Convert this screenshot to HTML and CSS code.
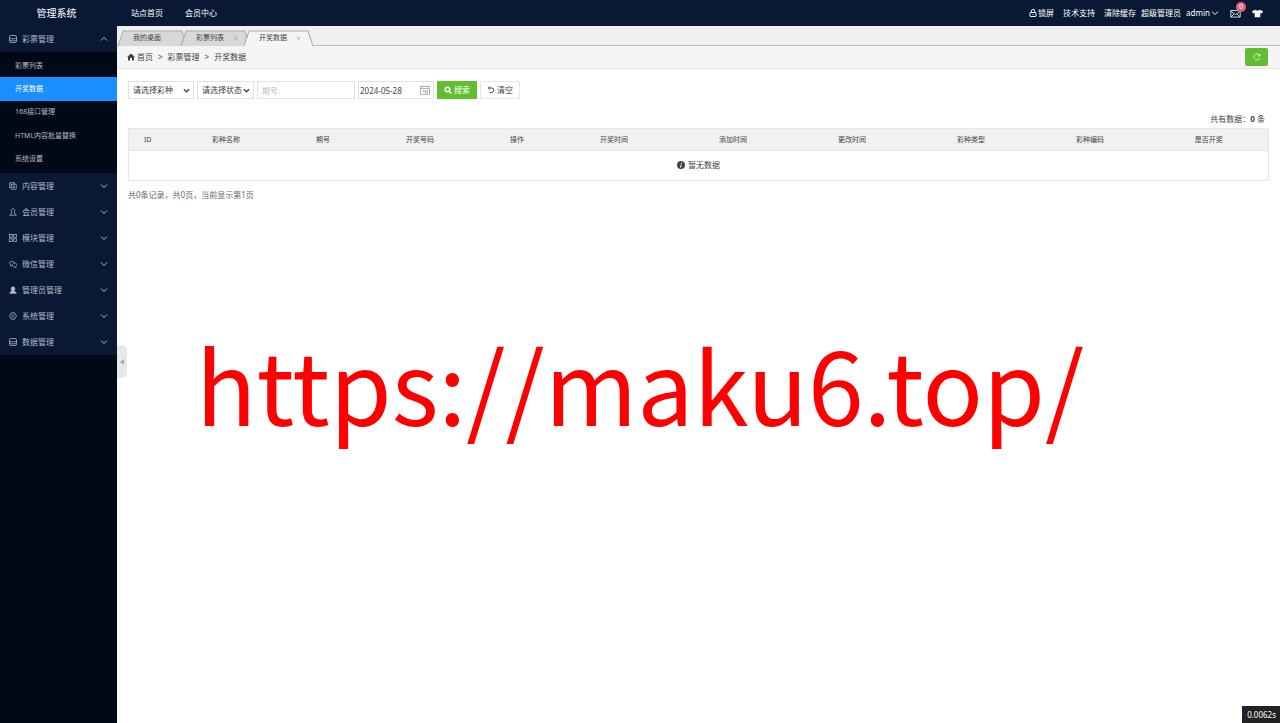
FILE: index.html
```html
<!DOCTYPE html>
<html lang="zh-CN">
<head>
    <meta charset="UTF-8">
    <meta name="viewport" content="width=device-width, initial-scale=1.0">
    <title>管理系统</title>
    <link rel="stylesheet" href="styles.css">
</head>
<body>
    <!-- 公用图标 -->
    <svg class="sprite" aria-hidden="true">
        <symbol id="i-data" viewBox="0 0 16 16"><rect x="1" y="1" width="14" height="14" rx="3"/><path d="M1 6c3 2.500 11 2.500 14 0M1 10c3 2.500 11 2.500 14 0"/></symbol>
        <symbol id="i-copy" viewBox="0 0 16 16"><path d="M4 11H1.500V1.500H11V4"/><rect x="4.500" y="4.500" width="10" height="10" rx="1"/><path d="M7 8h5M7 11h5M3 3l3 3"/></symbol>
        <symbol id="i-user" viewBox="0 0 16 16"><path d="M8 1.500c-2.500 0-3.500 2-3.500 4S5.500 9 6 10c0 1.500-4.500 1.500-4.500 4.500h13c0-3-4.500-3-4.500-4.500.5-1 1.500-2.500 1.500-4.500s-1-4-3.500-4z"/></symbol>
        <symbol id="i-block" viewBox="0 0 16 16"><rect x="1" y="1" width="5.500" height="5.500"/><rect x="9.500" y="1" width="5.500" height="5.500"/><rect x="1" y="9.500" width="5.500" height="5.500"/><rect x="9.500" y="9.500" width="5.500" height="5.500"/></symbol>
        <symbol id="i-wechat" viewBox="0 0 16 16"><path d="M6 11l-3 1 .5-2C-1 7 1 2.500 5.500 2.500c3 0 4.500 1.500 5 3.500"/><path d="M10.500 6c6 0 6.500 5 3 7l.5 2-2.500-1C5 14.500 5 6.500 10.500 6z"/></symbol>
        <symbol id="i-gear" viewBox="0 0 16 16"><path d="M5 1.500h6L15 8l-4 6.500H5L1 8z"/><path d="M5 6h6M5 10h6"/></symbol>
        <symbol id="i-down" viewBox="0 0 16 16"><path d="M2 5l6 6 6-6"/></symbol>
        <symbol id="i-close" viewBox="0 0 16 16"><path d="M2 2l12 12M14 2L2 14"/></symbol>
    </svg>

    <header class="topbar">
        <div class="logo">管理系统</div>
        <nav class="top-nav">
            <a href="#">站点首页</a>
            <a href="#">会员中心</a>
        </nav>
        <div class="top-tools">
            <a class="lock" href="#"><svg class="icon" viewBox="0 0 16 16"><rect x="2" y="7" width="12" height="8" rx="1"/><path d="M4.500 7V4.500a3.500 3.500 0 0 1 7 0V7M8 10v2"/></svg>锁屏</a>
            <a class="support" href="#">技术支持</a>
            <a href="#">清除缓存</a>
            <span>超级管理员</span>
            <a class="account" href="#">admin<svg class="icon chevron"><use href="#i-down"/></svg></a>
            <a class="mail" href="#" aria-label="消息">
                <svg class="icon" viewBox="0 0 20 16"><path d="M1.500 2.500h17v12h-17zM2 4l8 6 8-6M2 14l5-5M18 14l-5-5"/></svg>
                <span class="badge">0</span>
            </a>
            <a href="#" aria-label="换肤"><svg class="icon skin" viewBox="0 0 20 16"><path d="M6 1c1 2 7 2 8 0l6 3-2 4-3-1v8H5V7L2 8 0 4z"/></svg></a>
        </div>
    </header>

    <div class="layout">
        <aside class="sidebar">
            <ul class="menu">
                <li>
                    <a class="menu-head" href="#"><svg class="icon"><use href="#i-data"/></svg><span>彩票管理</span><svg class="icon chevron up"><use href="#i-down"/></svg></a>
                    <ul class="submenu">
                        <li><a href="#">彩票列表</a></li>
                        <li><a class="active" href="#">开奖数据</a></li>
                        <li><a href="#">168接口管理</a></li>
                        <li><a href="#">HTML内容批量替换</a></li>
                        <li><a href="#">系统设置</a></li>
                    </ul>
                </li>
                <li><a class="menu-head" href="#"><svg class="icon"><use href="#i-copy"/></svg><span>内容管理</span><svg class="icon chevron"><use href="#i-down"/></svg></a></li>
                <li><a class="menu-head" href="#"><svg class="icon"><use href="#i-user"/></svg><span>会员管理</span><svg class="icon chevron"><use href="#i-down"/></svg></a></li>
                <li><a class="menu-head" href="#"><svg class="icon"><use href="#i-block"/></svg><span>模块管理</span><svg class="icon chevron"><use href="#i-down"/></svg></a></li>
                <li><a class="menu-head" href="#"><svg class="icon"><use href="#i-wechat"/></svg><span>微信管理</span><svg class="icon chevron"><use href="#i-down"/></svg></a></li>
                <li><a class="menu-head" href="#"><svg class="icon solid"><use href="#i-user"/></svg><span>管理员管理</span><svg class="icon chevron"><use href="#i-down"/></svg></a></li>
                <li><a class="menu-head" href="#"><svg class="icon"><use href="#i-gear"/></svg><span>系统管理</span><svg class="icon chevron"><use href="#i-down"/></svg></a></li>
                <li><a class="menu-head" href="#"><svg class="icon"><use href="#i-data"/></svg><span>数据管理</span><svg class="icon chevron"><use href="#i-down"/></svg></a></li>
            </ul>
            <button class="fold" type="button" aria-label="收起菜单"><svg viewBox="0 0 4 6"><path d="M4 0v6L0 3z"/></svg></button>
        </aside>

        <main class="main">
            <ul class="tabs">
                <li class="tab">
                    <svg class="tab-shape" viewBox="0 0 68 16" preserveAspectRatio="none"><path d="M0 16L5 1h58l5 15"/></svg>
                    <a href="#">我的桌面</a>
                </li>
                <li class="tab">
                    <svg class="tab-shape" viewBox="0 0 68 16" preserveAspectRatio="none"><path d="M0 16L5 1h58l5 15"/></svg>
                    <a href="#">彩票列表</a>
                    <button type="button" aria-label="关闭"><svg class="icon"><use href="#i-close"/></svg></button>
                </li>
                <li class="tab current">
                    <svg class="tab-shape" viewBox="0 0 68 16" preserveAspectRatio="none"><path d="M0 16L5 1h58l5 15"/></svg>
                    <a href="#">开奖数据</a>
                    <button type="button" aria-label="关闭"><svg class="icon"><use href="#i-close"/></svg></button>
                </li>
            </ul>

            <div class="crumbs">
                <svg class="icon home" viewBox="0 0 16 16"><path d="M8 1l8 7h-2v7h-4v-5H6v5H2V8H0z"/></svg>
                <a href="#">首页</a><span>&gt;</span><a href="#">彩票管理</a><span>&gt;</span><a href="#">开奖数据</a>
                <button class="refresh" type="button" aria-label="刷新"><svg class="icon" viewBox="0 0 16 16"><path d="M13.500 10A6 6 0 0 1 3 11.500M2 9A6 6 0 0 1 12 3.500L14 6M14 2v4h-4"/></svg></button>
            </div>

            <div class="content">
                <form class="filters">
                    <div class="pick kind">
                        <select aria-label="彩种"><option>请选择彩种</option></select>
                        <svg class="icon"><use href="#i-down"/></svg>
                    </div>
                    <div class="pick state">
                        <select aria-label="状态"><option>请选择状态</option></select>
                        <svg class="icon"><use href="#i-down"/></svg>
                    </div>
                    <input class="issue" type="text" placeholder="期号" aria-label="期号">
                    <div class="pick date">
                        <input type="text" value="2024-05-28" aria-label="日期">
                        <svg class="icon" viewBox="0 0 20 20"><path d="M1 3h18v16H1zM1 7h18M5 1v4M15 1v4M5 11h3v5M11 11h4v5h-4z"/></svg>
                    </div>
                    <button class="search" type="submit"><svg class="icon" viewBox="0 0 16 16"><circle cx="7" cy="7" r="4.500"/><path d="M10.500 10.500L15 15"/></svg>搜索</button>
                    <button class="reset" type="reset"><svg class="icon" viewBox="0 0 16 16"><path d="M3 4h6a4.500 4.500 0 0 1 0 9H5M6 1L3 4l3 3"/></svg>清空</button>
                </form>

                <p class="total">共有数据：<strong>0</strong> 条</p>

                <table class="list">
                    <colgroup>
                        <col class="c-id"><col class="c-wide"><col class="c-small"><col class="c-wide"><col class="c-small">
                        <col class="c-wide" span="6">
                    </colgroup>
                    <thead>
                        <tr>
                            <th>ID</th>
                            <th>彩种名称</th>
                            <th>期号</th>
                            <th>开奖号码</th>
                            <th>操作</th>
                            <th>开奖时间</th>
                            <th>添加时间</th>
                            <th>更改时间</th>
                            <th>彩种类型</th>
                            <th>彩种编码</th>
                            <th>是否开奖</th>
                        </tr>
                    </thead>
                    <tbody>
                        <tr>
                            <td colspan="11"><div class="empty"><svg class="info" viewBox="0 0 16 16"><circle cx="8" cy="8" r="8"/><path d="M9 3v2M8.500 7l-1.500 6"/></svg>暂无数据</div></td>
                        </tr>
                    </tbody>
                </table>

                <p class="pager">共0条记录，共0页，当前显示第1页</p>
            </div>
        </main>
    </div>

    <div class="watermark">https://maku6.top/</div>
    <div class="runtime">0.0062s</div>
</body>
</html>
```
FILE: styles.css
```css
* {
    box-sizing: border-box;
}
body {
    margin: 0;
    min-height: 100vh;
    display: flex;
    flex-direction: column;
    font-family: "Noto Sans", "Noto Sans CJK SC", sans-serif;
    font-size: 8px;
    line-height: 12px;
    color: #444;
    background: #fff;
}
ul, p {
    margin: 0;
    padding: 0;
    list-style: none;
}
a {
    color: inherit;
    text-decoration: none;
}
button, input, select {
    font: inherit;
    color: inherit;
    margin: 0;
    padding: 0;
    border: 0;
    border-radius: 0;
    background: none;
}
button {
    cursor: pointer;
}
.sprite {
    display: none;
}
.icon {
    width: 8px;
    height: 8px;
    flex: none;
    fill: none;
    stroke: currentColor;
    stroke-width: 1.5;
}
.chevron {
    stroke-width: 2;
}

/* 顶部 */
.topbar {
    display: flex;
    align-items: center;
    height: 26px;
    color: #fff;
    background: #081835;
}
.logo {
    width: 117px;
    padding-right: 4px;
    text-align: center;
    font-size: 10px;
}
.top-nav {
    display: flex;
    gap: 22px;
    padding-left: 14px;
}
.top-tools {
    display: flex;
    align-items: center;
    gap: 5px;
    margin-left: auto;
    padding-right: 17px;
}
.top-tools a {
    display: flex;
    align-items: center;
}
.lock {
    gap: 1px;
    margin-right: 4px;
}
.lock .icon {
    stroke-width: 2;
}
.support {
    margin-right: 4px;
}
.account {
    gap: 1px;
}
.mail {
    position: relative;
    margin: 0 6px;
}
.mail .icon, .skin {
    width: 11px;
    height: 9px;
}
.skin {
    fill: #fff;
    stroke: none;
}
.badge {
    position: absolute;
    top: -7px;
    right: -5px;
    width: 10px;
    height: 10px;
    border-radius: 5px;
    font-size: 7px;
    line-height: 10px;
    text-align: center;
    background: #df6670;
}

/* 左侧菜单 */
.layout {
    flex: 1;
    display: flex;
}
.sidebar {
    position: relative;
    width: 117px;
    flex: none;
    color: #b4bac6;
    background: #000a17;
}
.menu-head {
    display: flex;
    align-items: center;
    gap: 5px;
    height: 26px;
    padding: 0 9px;
    background: #081835;
}
.menu-head .chevron {
    margin-left: auto;
}
.menu-head .up {
    transform: rotate(180deg);
}
.solid {
    fill: currentColor;
}
.submenu {
    display: grid;
    grid-auto-rows: 1fr;
    height: 121px;
    padding: 2px 0;
    font-size: 7px;
}
.submenu a {
    display: flex;
    align-items: center;
    height: 100%;
    padding-left: 15px;
}
.submenu .active {
    color: #fff;
    background: #1890ff;
}
.fold {
    position: absolute;
    top: 319px;
    left: 100%;
    width: 10px;
    height: 33px;
    border-radius: 0 5px 5px 0;
    background: #e8e8e8;
}
.fold svg {
    display: block;
    width: 4px;
    height: 6px;
    margin: 0 auto;
    fill: #aaa;
}

/* 标签页 */
.main {
    flex: 1;
    min-width: 0;
}
.tabs {
    display: flex;
    align-items: flex-end;
    height: 20px;
    padding-left: 1px;
    border-bottom: 1px solid #bbb;
    background: #efeff1;
}
.tab {
    position: relative;
    display: flex;
    align-items: center;
    gap: 9px;
    width: 69px;
    height: 16px;
    padding-left: 15px;
    margin-bottom: -1px;
    font-size: 7px;
}
.tab + .tab {
    margin-left: -6px;
}
.tab.current {
    z-index: 1;
}
.tab-shape {
    position: absolute;
    inset: 0;
    width: 100%;
    height: 100%;
    fill: #d8d8d8;
    stroke: #aaa;
}
.current .tab-shape {
    fill: #f5f5f5;
}
.tab a, .tab button {
    position: relative;
    display: flex;
}
.tab .icon {
    width: 5px;
    height: 5px;
    stroke: #999;
    stroke-width: 2;
}

/* 面包屑 */
.crumbs {
    display: flex;
    align-items: center;
    gap: 5px;
    height: 23px;
    padding: 0 12px 0 10px;
    border-bottom: 1px solid #e3e3e3;
    background: #f5f5f5;
}
.crumbs .home {
    margin-right: -3px;
    fill: #444;
    stroke: none;
}
.refresh {
    display: grid;
    place-items: center;
    width: 23px;
    height: 18px;
    margin-left: auto;
    border-radius: 2px;
    color: #fff;
    background: #62bd35;
}

/* 列表内容 */
.content {
    padding: 12px 12px 12px 11px;
}
.filters {
    display: flex;
    gap: 3px;
    height: 18px;
}
.filters input, .filters select {
    width: 100%;
    height: 18px;
    padding: 0 4px;
    border: 1px solid #e1e1e1;
    appearance: none;
    background: #fff;
}
.pick {
    display: grid;
    align-items: center;
    justify-items: end;
}
.pick > * {
    grid-area: 1 / 1;
}
.pick .icon {
    margin-right: 4px;
    stroke-width: 3;
    width: 7px;
    height: 7px;
    pointer-events: none;
}
.kind {
    width: 66px;
}
.state {
    width: 57px;
}
.filters .issue {
    width: 98px;
}
.filters .date {
    width: 76px;
}
.filters .date input {
    padding: 0 1px;
}
.filters .date .icon {
    width: 10px;
    height: 10px;
    color: #999;
    stroke-width: 1.5;
}
.filters ::placeholder {
    color: #bbb;
}
.filters button {
    display: flex;
    align-items: center;
    justify-content: center;
    gap: 2px;
    width: 40px;
}
.filters button .icon {
    stroke-width: 2;
}
.filters .search {
    color: #fff;
    background: #5fbf2d;
}
.filters .search .icon {
    stroke-width: 3;
}
.filters .reset {
    border: 1px solid #e6e6e6;
}
.total {
    padding: 14px 3px 3px;
    text-align: right;
}
.list {
    width: 100%;
    table-layout: fixed;
    border-collapse: collapse;
    border: 1px solid #e6e6e6;
}
.c-id {
    width: 38px;
}
.c-wide {
    width: 119px;
}
.c-small {
    width: 75px;
}
.list th {
    height: 22px;
    padding: 0;
    font-size: 7px;
    font-weight: normal;
    background: #f1f1f1;
    border-bottom: 1px solid #e6e6e6;
}
.list td {
    height: 30px;
    padding: 0 0 1px;
}
.empty {
    display: flex;
    align-items: center;
    justify-content: center;
    gap: 3px;
}
.info {
    width: 8px;
    height: 8px;
    fill: #444;
    stroke: #fff;
    stroke-width: 2;
}
.info circle {
    stroke: none;
}
.pager {
    padding-top: 8px;
    color: #666;
}

.watermark {
    position: fixed;
    inset: 0;
    z-index: 5;
    display: grid;
    place-items: center;
    padding-top: 42px;
    font-family: "Noto Sans CJK SC", sans-serif;
    font-size: 100px;
    line-height: normal;
    color: #f00;
    pointer-events: none;
}
.runtime {
    position: fixed;
    right: 0;
    bottom: 0;
    padding: 3px 4px 2px 5px;
    color: #fff;
    background: #222;
}
```
